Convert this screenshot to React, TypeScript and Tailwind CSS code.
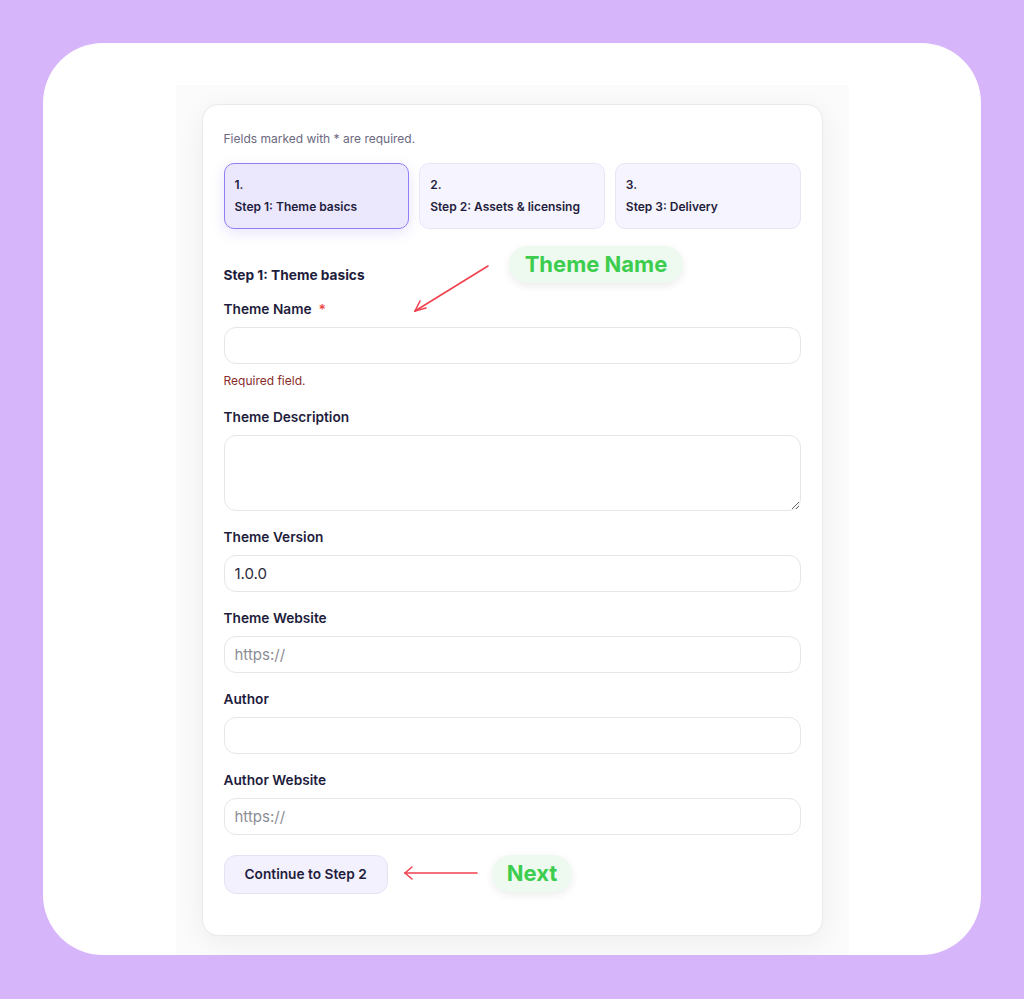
import React from "react";

const font = { fontFamily: "Inter, 'Noto Sans', sans-serif" };

function Field({
  label,
  required,
  placeholder,
  value,
  error,
  multiline,
}: {
  label: string;
  required?: boolean;
  placeholder?: string;
  value?: string;
  error?: string;
  multiline?: boolean;
}) {
  return (
    <div className="flex flex-col">
      <label className="text-[13.7px] leading-[20px] font-semibold text-[#1f1d3d]">
        {label}
        {required && <span className="ml-[7px] text-[#ef4444]">*</span>}
      </label>
      {multiline ? (
        <textarea
          className="mt-[8px] h-[76px] w-full rounded-[12px] border border-[#e6e6ea] bg-white px-[10px] py-[8px] text-[15px] text-[#2a2838] outline-none"
          placeholder={placeholder}
        />
      ) : (
        <input
          className="mt-[8px] h-[37px] w-full rounded-[12px] border border-[#e6e6ea] bg-white px-[10px] text-[15px] text-[#2a2838] outline-none placeholder:text-[#8d8d95]"
          placeholder={placeholder}
          defaultValue={value}
        />
      )}
      {error && (
        <p className="mt-[7px] text-[12px] leading-[20px] text-[#8a2b2b]">{error}</p>
      )}
    </div>
  );
}

const steps = [
  { n: "1.", label: "Step 1: Theme basics", active: true },
  { n: "2.", label: "Step 2: Assets & licensing", active: false },
  { n: "3.", label: "Step 3: Delivery", active: false },
];

export default function App() {
  return (
    <div className="min-h-[999px] bg-[#d7b5fa] px-[43px] pt-[43px]" style={font}>
      <div className="relative h-[912px] rounded-[60px] bg-white pt-[42px]">
        <div className="mx-auto h-full w-[673px] bg-[#fbfbfb] px-[26px] pt-[19px]">
          <div className="rounded-[16px] border border-[#e9e9ee] bg-white px-[21px] pt-[24px] pb-[41px] shadow-[0_6px_28px_rgba(0,0,0,0.06)]">
            <p className="text-[12px] leading-[20px] text-[#6b6880]">
              Fields marked with * are required.
            </p>

            <div className="mt-[14px] grid grid-cols-3 gap-[10px]">
              {steps.map((s) => (
                <div
                  key={s.n}
                  className={
                    s.active
                      ? "flex flex-col gap-[2px] rounded-[10px] border border-[#8f7ff5] bg-[#ebe7fd] px-[10px] py-[11px] shadow-[0_4px_14px_rgba(124,104,240,0.18)]"
                      : "flex flex-col gap-[2px] rounded-[10px] border border-[#e9e6f6] bg-[#f6f4fe] px-[10px] py-[11px]"
                  }
                >
                  <span className="text-[12px] leading-[20px] font-semibold text-[#1f1d3d]">{s.n}</span>
                  <span className="text-[12px] leading-[20px] font-semibold text-[#1f1d3d]">{s.label}</span>
                </div>
              ))}
            </div>

            <h2 className="mt-[36px] text-[13.7px] leading-[20px] font-bold text-[#1f1d3d]">
              Step 1: Theme basics
            </h2>

            <div className="mt-[14px] flex flex-col gap-[16px]">
              <Field label="Theme Name" required error="Required field." />
              <Field label="Theme Description" multiline />
              <Field label="Theme Version" value="1.0.0" />
              <Field label="Theme Website" placeholder="https://" />
              <Field label="Author" />
              <Field label="Author Website" placeholder="https://" />
            </div>

            <button className="mt-[20px] h-[39px] rounded-[12px] border border-[#e5e1f5] bg-[#f4f1fe] px-[20px] text-[13.7px] font-semibold text-[#1f1d3d]">
              Continue to Step 2
            </button>
          </div>
        </div>

        {/* annotation: Theme Name */}
        <svg
          className="absolute left-[360px] top-[215px]"
          width="100"
          height="60"
          viewBox="0 0 100 60"
          fill="none"
          stroke="#f0424f"
          strokeWidth="1.6"
          strokeLinecap="round"
        >
          <path d="M85 8 L12 53" />
          <path d="M12 53 L23 50" />
          <path d="M12 53 L17 43" />
        </svg>
        <div className="absolute left-[466px] top-[203px] flex h-[37px] w-[174px] items-center justify-center rounded-full bg-[#eefaef] text-[22px] font-bold text-[#3dcd4e] shadow-[0_3px_8px_rgba(0,0,0,0.08)]">
          Theme Name
        </div>

        {/* annotation: Next */}
        <svg
          className="absolute left-[358px] top-[820px]"
          width="80"
          height="20"
          viewBox="0 0 80 20"
          fill="none"
          stroke="#f0424f"
          strokeWidth="1.6"
          strokeLinecap="round"
        >
          <path d="M76 10 L4 10" />
          <path d="M4 10 L11 4" />
          <path d="M4 10 L11 16" />
        </svg>
        <div className="absolute left-[449px] top-[812px] flex h-[37px] w-[80px] items-center justify-center rounded-full bg-[#eefaef] text-[22px] font-bold text-[#3dcd4e] shadow-[0_3px_8px_rgba(0,0,0,0.08)]">
          Next
        </div>
      </div>
    </div>
  );
}
